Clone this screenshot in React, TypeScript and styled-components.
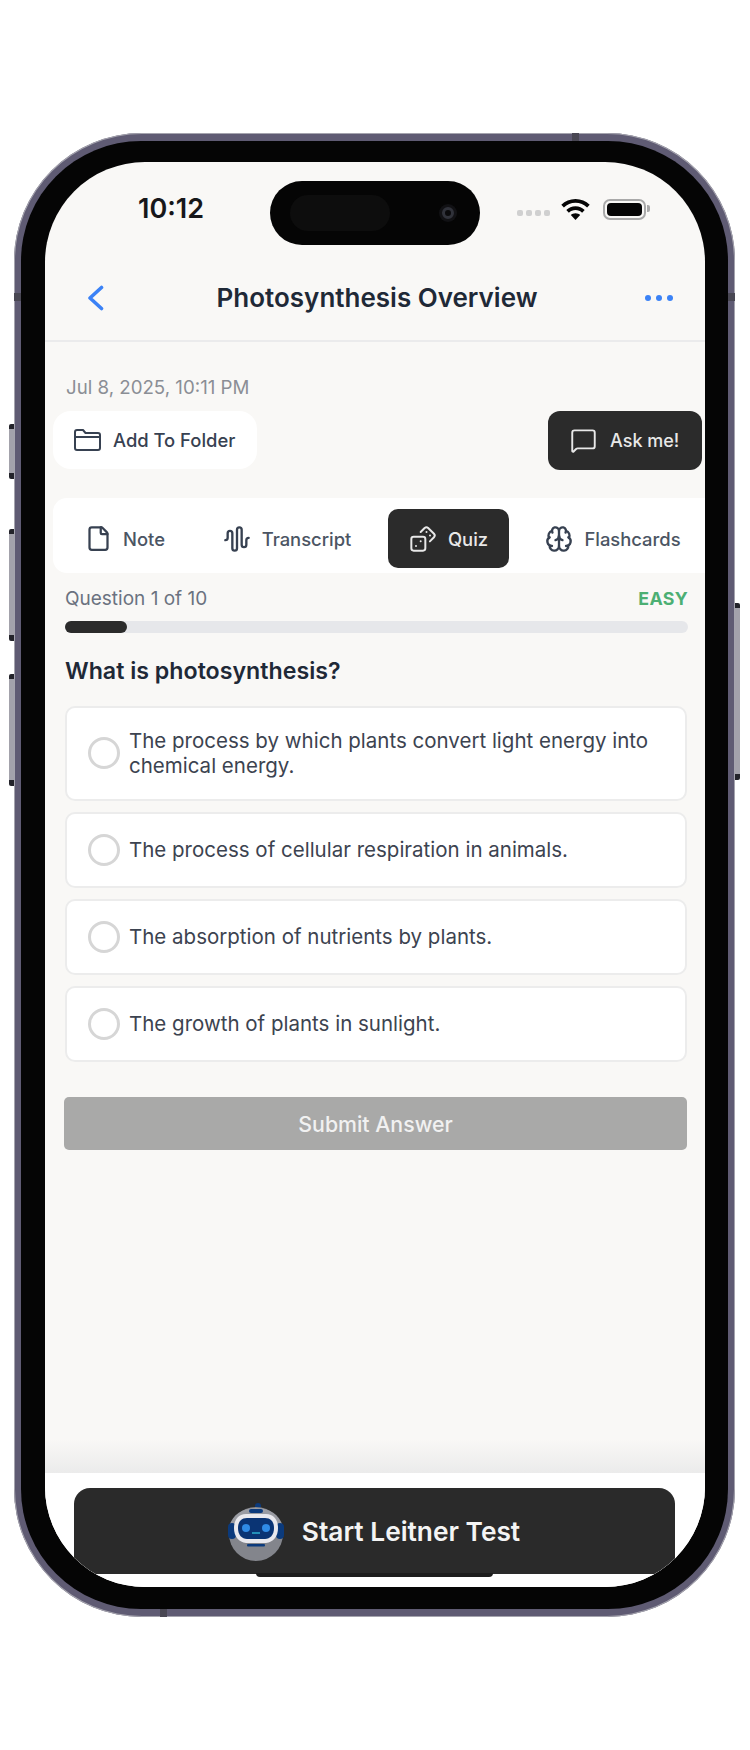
import React from 'react'
import styled, { createGlobalStyle } from 'styled-components'
import { AudioWaveform, Brain, Dices, File, MessageSquare } from 'lucide-react'

const GlobalStyle = createGlobalStyle`
  html, body {
    margin: 0;
    padding: 0;
    background: #fff;
  }
  * {
    box-sizing: border-box;
  }
`

const Page = styled.div`
  width: 750px;
  height: 1750px;
  padding: 133px 15px 0 14px;
  font-family: Inter, "Liberation Sans", sans-serif;
  overflow: hidden;
`

const Phone = styled.div`
  position: relative;
  width: 721px;
  height: 1484px;
  padding: 8px 7px;
  border-radius: 128px;
  background: #5f5b73;
  box-shadow: inset 0 0 0 1px #a5a4ae;
`

const Bezel = styled.div`
  height: 100%;
  padding: 21px 23px 22px 24px;
  border-radius: 120px;
  background: #050505;
`

const SideButton = styled.span<{ $top: number; $height: number; $right?: boolean }>`
  position: absolute;
  top: ${p => p.$top}px;
  ${p => (p.$right ? 'right: -5px;' : 'left: -5px;')}
  width: 5px;
  height: ${p => p.$height}px;
  border-radius: ${p => (p.$right ? '0 2px 2px 0' : '2px 0 0 2px')};
  background: linear-gradient(#23232a 0 5px, #a3a2ab 5px calc(100% - 6px), #23232a calc(100% - 6px));
`

const Band = styled.span<{ $top?: number; $left?: number; $right?: boolean; $bottom?: boolean }>`
  position: absolute;
  width: 7px;
  height: 8px;
  background: #494753;
  ${p => (p.$top !== undefined ? `top: ${p.$top}px;` : '')}
  ${p => (p.$left !== undefined ? `left: ${p.$left}px;` : '')}
  ${p => (p.$right ? 'right: 0;' : '')}
  ${p => (p.$bottom ? 'bottom: 0;' : '')}
`

const Screen = styled.div`
  display: flex;
  flex-direction: column;
  height: 100%;
  border-radius: 100px;
  overflow: hidden;
  background: #f9f8f6;
`

const StatusBar = styled.div`
  display: grid;
  grid-template-columns: 225px 210px 1fr;
  padding-top: 19px;
`

const Time = styled.div`
  padding: 8px 0 0 93px;
  font-size: 27px;
  line-height: 40px;
  font-weight: 600;
  color: #17171a;
`

const Island = styled.div`
  display: flex;
  align-items: center;
  justify-content: space-between;
  height: 64px;
  padding: 0 26px 0 20px;
  border-radius: 32px;
  background: #050505;
`

const IslandPill = styled.span`
  width: 100px;
  height: 36px;
  border-radius: 18px;
  background: #0d0d0d;
`

const Lens = styled.span`
  width: 12px;
  height: 12px;
  border-radius: 50%;
  border: 3px solid #30323a;
  background: #0a0a0c;
  box-shadow: 0 0 0 3px #111114;
`

const StatusIcons = styled.div`
  display: flex;
  align-items: center;
  height: 56px;
  padding-left: 37px;
`

const Signal = styled.div`
  display: flex;
  gap: 3px;
  margin: 8px 11px 0 0;
`

const SignalDot = styled.span`
  width: 6px;
  height: 6px;
  border-radius: 2px;
  background: #d0d0d0;
`

const Battery = styled.div`
  position: relative;
  width: 43px;
  height: 21px;
  margin-left: 13px;
  padding: 2px;
  border: 2px solid #a9a9a9;
  border-radius: 7px;

  &::after {
    content: '';
    position: absolute;
    top: 4px;
    right: -6px;
    width: 3px;
    height: 7px;
    border-radius: 0 2px 2px 0;
    background: #a9a9a9;
  }
`

const BatteryFill = styled.div`
  height: 100%;
  border-radius: 4px;
  background: #050505;
`

const NavBar = styled.div`
  display: grid;
  grid-template-columns: 60px 1fr 60px;
  align-items: center;
  height: 97px;
  padding-top: 10px;
  border-bottom: 2px solid #ebebec;
`

const BackButton = styled.div`
  display: flex;
  padding-left: 42px;
`

const Title = styled.div`
  padding-left: 4px;
  text-align: center;
  font-size: 26px;
  font-weight: 600;
  color: #1f2937;
`

const MoreButton = styled.div`
  display: flex;
  gap: 5px;
`

const MoreDot = styled.span`
  width: 6px;
  height: 6px;
  border-radius: 50%;
  background: #3b82f6;
`

const Main = styled.div`
  flex: 1;
  min-height: 0;
`

const DateText = styled.div`
  padding: 35px 0 0 21px;
  font-size: 18.7px;
  line-height: 22px;
  color: #8b8e95;
`

const ActionRow = styled.div`
  display: flex;
  justify-content: space-between;
  padding: 12px 3px 0 8px;
`

const FolderButton = styled.div`
  display: flex;
  align-items: center;
  gap: 12px;
  width: 204px;
  height: 58px;
  padding: 0 0 0 21px;
  border-radius: 18px;
  background: #fff;
  font-size: 18.4px;
  font-weight: 500;
  color: #374151;
`

const AskButton = styled.div`
  display: flex;
  align-items: center;
  gap: 13px;
  width: 154px;
  height: 59px;
  padding-left: 22px;
  border-radius: 12px;
  background: #2b2b2b;
  font-size: 18px;
  font-weight: 500;
  color: #e8e8e8;
`

const TabBar = styled.div`
  display: flex;
  align-items: center;
  height: 75px;
  margin: 28px 0 0 8px;
  padding-top: 6px;
  background: #fff;
  border-radius: 14px 0 0 14px;
`

const Tab = styled.div<{ $width: number; $inset?: string; $active?: boolean }>`
  display: flex;
  align-items: center;
  justify-content: center;
  gap: 11px;
  width: ${p => p.$width}px;
  height: 59px;
  padding: ${p => p.$inset ?? '0'};
  border-radius: 10px;
  background: ${p => (p.$active ? '#2b2b2b' : 'transparent')};
  color: ${p => (p.$active ? '#e8e8e8' : '#4b5563')};
  font-size: 18.4px;
  font-weight: 500;

  svg {
    color: ${p => (p.$active ? '#e8e8e8' : '#374151')};
  }
`

const Quiz = styled.div`
  padding: 13px 17px 0 20px;
`

const ProgressHead = styled.div`
  display: flex;
  justify-content: space-between;
  align-items: center;
  height: 24px;
`

const ProgressLabel = styled.div`
  font-size: 19px;
  color: #6b7280;
`

const Difficulty = styled.div`
  font-size: 17.8px;
  font-weight: 700;
  letter-spacing: 0.3px;
  color: #4caf73;
`

const ProgressTrack = styled.div`
  height: 12px;
  margin-top: 11px;
  border-radius: 6px;
  background: #e6e7ea;
`

const ProgressFill = styled.div`
  height: 100%;
  border-radius: 6px;
  background: #2b2b2b;
`

const Question = styled.div`
  margin-top: 23px;
  font-size: 23.2px;
  line-height: 30px;
  font-weight: 600;
  color: #1f2937;
`

const Options = styled.div`
  display: flex;
  flex-direction: column;
  gap: 11px;
  margin: 20px 1px 0 0;
`

const Option = styled.div<{ $tall?: boolean }>`
  display: flex;
  align-items: center;
  gap: 9px;
  height: ${p => (p.$tall ? 95 : 76)}px;
  padding: 0 30px 1px 21px;
  border: 2px solid #ececec;
  border-radius: 10px;
  background: #fff;
  font-size: 20.5px;
  line-height: 25px;
  color: #3c4350;
`

const Radio = styled.span`
  flex: none;
  width: 32px;
  height: 32px;
  border: 3px solid #d6d6d6;
  border-radius: 50%;
`

const SubmitButton = styled.div`
  display: flex;
  align-items: center;
  justify-content: center;
  height: 53px;
  margin: 35px 1px 0 -1px;
  border-radius: 5px;
  background: #a9a9a8;
  font-size: 21.3px;
  font-weight: 500;
  color: #f1f1f1;
`

const FooterShade = styled.div`
  height: 34px;
  background: linear-gradient(#f9f8f6, #ebebeb);
`

const Footer = styled.div`
  position: relative;
  padding: 15px 30px 13px 29px;
  background: #fff;
`

const LeitnerButton = styled.div`
  display: flex;
  align-items: center;
  justify-content: center;
  gap: 17px;
  height: 86px;
  padding-right: 2px;
  border-radius: 16px;
  background: #2a2a2a;
  font-size: 26.3px;
  font-weight: 600;
  color: #f4f4f4;
`

const HomeBar = styled.span`
  position: absolute;
  left: 211px;
  bottom: 10px;
  width: 237px;
  height: 4px;
  border-radius: 0 0 4px 4px;
  background: #1d1d1d;
`

const BackIcon = () => (
  <svg width="17" height="26" viewBox="0 0 17 26" fill="none" stroke="#3b82f6" strokeWidth="3.6" strokeLinecap="round" strokeLinejoin="round">
    <path d="M14.5 2.5 3 13l11.5 10.5" />
  </svg>
)

const FolderIcon = () => (
  <svg width="27" height="22" viewBox="0 0 27 22" fill="none" stroke="#374151" strokeWidth="2" strokeLinejoin="round">
    <path d="M1 4.5V3a2 2 0 0 1 2-2h6l2.5 3H24a2 2 0 0 1 2 2v13a2 2 0 0 1-2 2H3a2 2 0 0 1-2-2Z" />
    <path d="M1 8h25" />
  </svg>
)

const WifiIcon = () => (
  <svg width="29" height="21" viewBox="0 0 29 21">
    <path d="M14.5 0C9 0 4 2.2 0.3 5.8l2.6 2.8C6 5.6 10 3.8 14.5 3.8s8.5 1.8 11.6 4.8l2.6-2.8C25 2.2 20 0 14.5 0Z" fill="#050505" />
    <path d="M14.5 7.3c-3.6 0-6.8 1.4-9.2 3.7l2.6 2.8c1.7-1.7 4-2.7 6.6-2.7s4.9 1 6.6 2.7l2.6-2.8c-2.4-2.3-5.6-3.7-9.2-3.7Z" fill="#050505" />
    <path d="M14.5 14.2c-1.9 0-3.5.7-4.7 1.8l4.7 4.9 4.7-4.9c-1.2-1.1-2.8-1.8-4.7-1.8Z" fill="#050505" />
  </svg>
)

const RobotIcon = () => (
  <svg width="58" height="60" viewBox="0 0 58 60">
    <circle cx="31" cy="5" r="3" fill="#0b3a7c" />
    <circle cx="29" cy="33" r="27" fill="#83858c" />
    <path d="M2 26C5 14 15 7 29 7s24 7 27 19Z" fill="#9a9ca3" />
    <rect x="1" y="22" width="8" height="16" rx="4" fill="#0b3a7c" />
    <rect x="49" y="22" width="8" height="16" rx="4" fill="#0b3a7c" />
    <rect x="22" y="8" width="14" height="4" rx="2" fill="#0b3a7c" />
    <path d="M19 13h20c8 0 12 6 12 14 0 9-5 14-12 15H19c-7-1-12-6-12-15 0-8 4-14 12-14Z" fill="#e9e9ee" />
    <path d="M20 17h18c6 0 9 4 9 10 0 7-4 11-9 11H20c-5 0-9-4-9-11 0-6 3-10 9-10Z" fill="#0a3474" />
    <circle cx="19" cy="27" r="4" fill="#2f8be6" />
    <circle cx="39" cy="27" r="4" fill="#2f8be6" />
    <path d="M25 32h8" stroke="#2aa7c9" strokeWidth="1.6" />
    <rect x="20" y="43" width="18" height="2.5" rx="1" fill="#0b3a7c" />
  </svg>
)

const answers = [
  'The process of cellular respiration in animals.',
  'The absorption of nutrients by plants.',
  'The growth of plants in sunlight.',
]

const App = () => {
  return (
    <Page>
      <GlobalStyle />
      <Phone>
        <SideButton $top={291} $height={55} />
        <SideButton $top={396} $height={112} />
        <SideButton $top={541} $height={112} />
        <SideButton $right $top={470} $height={177} />
        <Band $top={0} $left={558} />
        <Band $top={160} $left={0} />
        <Band $top={160} $right />
        <Band $left={146} $bottom />
        <Bezel>
          <Screen>
            <StatusBar>
              <Time>10:12</Time>
              <Island>
                <IslandPill />
                <Lens />
              </Island>
              <StatusIcons>
                <Signal>
                  <SignalDot />
                  <SignalDot />
                  <SignalDot />
                  <SignalDot />
                </Signal>
                <WifiIcon />
                <Battery>
                  <BatteryFill />
                </Battery>
              </StatusIcons>
            </StatusBar>
            <NavBar>
              <BackButton>
                <BackIcon />
              </BackButton>
              <Title>Photosynthesis Overview</Title>
              <MoreButton>
                <MoreDot />
                <MoreDot />
                <MoreDot />
              </MoreButton>
            </NavBar>
            <Main>
              <DateText>Jul 8, 2025, 10:11 PM</DateText>
              <ActionRow>
                <FolderButton>
                  <FolderIcon />
                  Add To Folder
                </FolderButton>
                <AskButton>
                  <MessageSquare size={27} strokeWidth={1.7} />
                  Ask me!
                </AskButton>
              </ActionRow>
              <TabBar>
                <Tab $width={144}>
                  <File size={27} strokeWidth={2} />
                  Note
                </Tab>
                <Tab $width={191} $inset="0 11px 0 0">
                  <AudioWaveform size={28} strokeWidth={2} />
                  Transcript
                </Tab>
                <Tab $width={121} $active>
                  <Dices size={28} strokeWidth={1.7} />
                  Quiz
                </Tab>
                <Tab $width={196} $inset="0 0 0 12px">
                  <Brain size={28} strokeWidth={2} />
                  Flashcards
                </Tab>
              </TabBar>
              <Quiz>
                <ProgressHead>
                  <ProgressLabel>Question 1 of 10</ProgressLabel>
                  <Difficulty>EASY</Difficulty>
                </ProgressHead>
                <ProgressTrack>
                  <ProgressFill style={{ width: `${(1 / 10) * 100}%` }} />
                </ProgressTrack>
                <Question>What is photosynthesis?</Question>
                <Options>
                  <Option $tall>
                    <Radio />
                    The process by which plants convert light energy into chemical energy.
                  </Option>
                  {answers.map(text => (
                    <Option key={text}>
                      <Radio />
                      {text}
                    </Option>
                  ))}
                </Options>
                <SubmitButton>Submit Answer</SubmitButton>
              </Quiz>
            </Main>
            <FooterShade />
            <Footer>
              <LeitnerButton>
                <RobotIcon />
                Start Leitner Test
              </LeitnerButton>
              <HomeBar />
            </Footer>
          </Screen>
        </Bezel>
      </Phone>
    </Page>
  )
}

export default App
